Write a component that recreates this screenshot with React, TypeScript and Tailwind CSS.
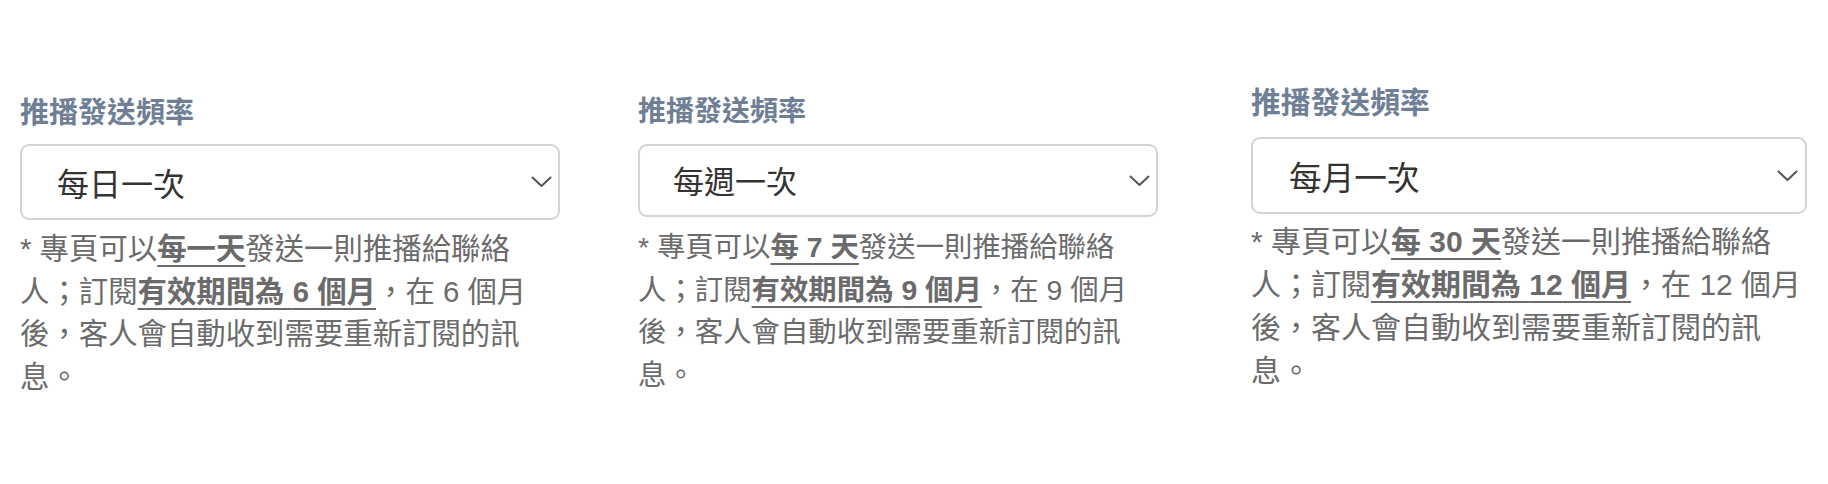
import React from "react";

type Panel = {
  value: string;
  every: string;
  months: string;
  col: string;
  label: string;
  box: string;
  valueText: string;
  help: string;
};

const panels: Panel[] = [
  {
    value: "每日一次",
    every: "每一天",
    months: "6",
    col: "w-[540px] pt-[92px]",
    label: "text-[29px] leading-[36px]",
    box: "mt-[16px] h-[76px] pl-[35px] pr-[6px]",
    valueText: "text-[32px]",
    help: "mt-[8px] text-[29.4px] leading-[42.5px]",
  },
  {
    value: "每週一次",
    every: "每 7 天",
    months: "9",
    col: "ml-[78px] w-[520px] pt-[91px]",
    label: "text-[28px] leading-[36px]",
    box: "mt-[17px] h-[73px] pl-[33px] pr-[6px]",
    valueText: "text-[31px]",
    help: "mt-[9px] text-[28.4px] leading-[42.5px]",
  },
  {
    value: "每月一次",
    every: "每 30 天",
    months: "12",
    col: "ml-[93px] w-[556px] pt-[82px]",
    label: "text-[29.8px] leading-[36px]",
    box: "mt-[19px] h-[77px] pl-[36px] pr-[7px]",
    valueText: "text-[32.7px]",
    help: "mt-[6px] text-[30px] leading-[43px]",
  },
];

function Chevron() {
  return (
    <svg width="21" height="12" viewBox="0 0 21 12" fill="none" className="shrink-0">
      <path d="M1.5 1.5 L10.5 10 L19.5 1.5" stroke="#555555" strokeWidth="2" strokeLinecap="round" strokeLinejoin="round" />
    </svg>
  );
}

function FrequencyField({ p }: { p: Panel }) {
  return (
    <div className={`flex flex-col ${p.col}`}>
      <label
        className={`font-bold text-[#6f7f96] ${p.label}`}
        style={{ fontFamily: '"Noto Sans CJK TC", sans-serif' }}
      >
        推播發送頻率
      </label>
      <div
        className={`flex items-center justify-between rounded-[9px] border-2 border-[#d0d4d9] bg-white ${p.box}`}
      >
        <span
          className={`text-[#333333] ${p.valueText}`}
          style={{ fontFamily: '"Noto Sans CJK TC", sans-serif' }}
        >
          {p.value}
        </span>
        <Chevron />
      </div>
      <div
        className={`whitespace-nowrap text-[#6b6b6b] ${p.help}`}
        style={{ fontFamily: '"Liberation Sans", "Noto Sans CJK TC", sans-serif' }}
      >
        <div>
          * 專頁可以
          <span className="font-bold underline decoration-2 underline-offset-[6px]">{p.every}</span>
          發送一則推播給聯絡
        </div>
        <div>
          人；訂閱
          <span className="font-bold underline decoration-2 underline-offset-[6px]">
            有效期間為 {p.months} 個月
          </span>
          ，在 {p.months} 個月
        </div>
        <div>後，客人會自動收到需要重新訂閱的訊</div>
        <div>息。</div>
      </div>
    </div>
  );
}

export default function App() {
  return (
    <div className="flex h-[484px] w-full items-start bg-white pl-[20px]">
      {panels.map((p) => (
        <FrequencyField key={p.value} p={p} />
      ))}
    </div>
  );
}
